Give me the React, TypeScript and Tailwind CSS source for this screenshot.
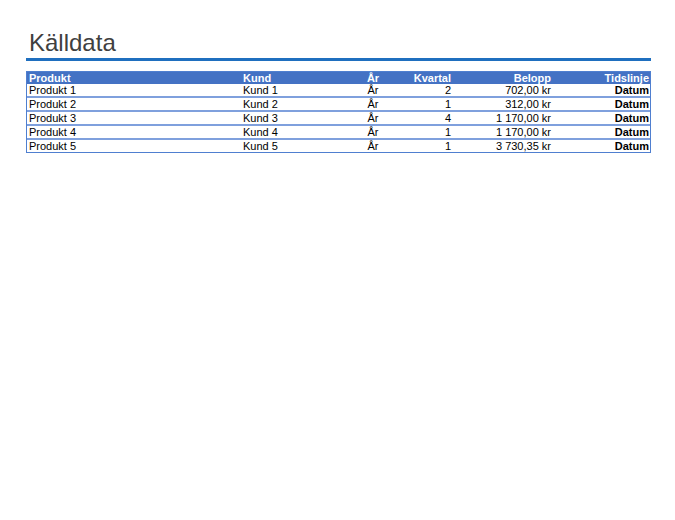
export default function App() {
  const rows = [
    ["Produkt 1", "Kund 1", "År", "2", "702,00 kr"],
    ["Produkt 2", "Kund 2", "År", "1", "312,00 kr"],
    ["Produkt 3", "Kund 3", "År", "4", "1 170,00 kr"],
    ["Produkt 4", "Kund 4", "År", "1", "1 170,00 kr"],
    ["Produkt 5", "Kund 5", "År", "1", "3 730,35 kr"],
  ];
  const cols = "grid grid-cols-[214px_112px_40px_60px_100px_97px]";
  return (
    <div className="w-[675px] h-[520px] bg-white" style={{ fontFamily: '"Liberation Sans", Arial, sans-serif' }}>
      <div className="pt-[29px] pl-[29px] text-[24px] leading-[28px] text-[#404040]">Källdata</div>
      <div className="mx-[26px] mt-[1px] h-[3px] bg-[#1f6fbf] w-[625px]" />
      <div className="ml-[26px] mt-[10px] w-[625px] border border-[#4f7fd0] text-[11px] leading-[12px]">
        <div className={`${cols} bg-[#4472c4] text-white font-bold`}>
          <div className="pl-[2px]">Produkt</div>
          <div className="pl-[2px]">Kund</div>
          <div className="text-center">År</div>
          <div className="text-right pr-[2px]">Kvartal</div>
          <div className="text-right pr-[2px]">Belopp</div>
          <div className="text-right pr-[1px]">Tidslinje</div>
        </div>
        {rows.map((r, i) => (
          <div key={i} className={`${cols} text-black ${i > 0 ? "border-t-2 border-[#7fa0dd]" : ""}`}>
            <div className="pl-[2px]">{r[0]}</div>
            <div className="pl-[2px]">{r[1]}</div>
            <div className="text-center">{r[2]}</div>
            <div className="text-right pr-[2px]">{r[3]}</div>
            <div className="text-right pr-[2px]">{r[4]}</div>
            <div className="text-right pr-[1px] font-bold">Datum</div>
          </div>
        ))}
      </div>
    </div>
  );
}
